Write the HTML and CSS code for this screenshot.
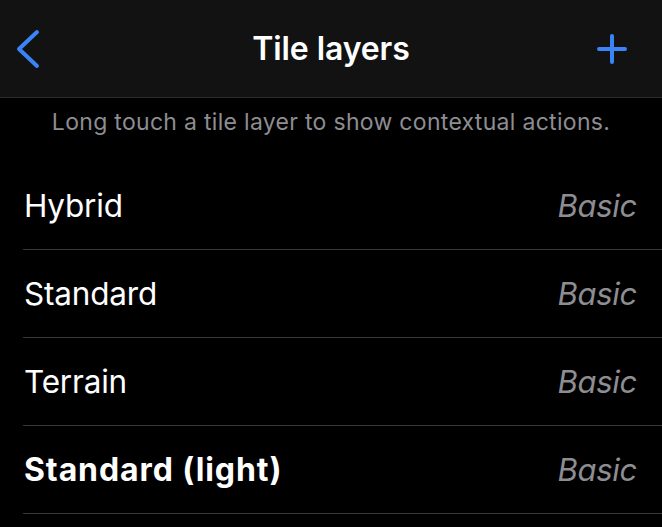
FILE: index.html
```html
<!DOCTYPE html>
<html>
<head>
<meta charset="utf-8">
<link rel="stylesheet" href="styles.css">
</head>
<body>
<div class="screen">
  <header class="navbar">
    <div class="nav-left">
      <svg class="back" width="26" height="42" viewBox="0 0 26 42"><path d="M23 4 L5 21 L23 38" fill="none" stroke="#3a84f7" stroke-width="4" stroke-linecap="round" stroke-linejoin="round"/></svg>
    </div>
    <h1 class="title">Tile layers</h1>
    <div class="nav-right">
      <svg class="plus" width="32" height="32" viewBox="0 0 32 32"><path d="M16 3 V29 M3 16 H29" fill="none" stroke="#3a84f7" stroke-width="4" stroke-linecap="round"/></svg>
    </div>
  </header>
  <p class="hint">Long touch a tile layer to show contextual actions.</p>
  <ul class="list">
    <li class="row"><span class="name">Hybrid</span><span class="kind">Basic</span></li>
    <li class="row"><span class="name">Standard</span><span class="kind">Basic</span></li>
    <li class="row"><span class="name">Terrain</span><span class="kind">Basic</span></li>
    <li class="row"><span class="name name-bold">Standard (light)</span><span class="kind">Basic</span></li>
  </ul>
</div>
</body>
</html>
```

FILE: styles.css
```css
html, body {
  margin: 0;
  padding: 0;
  background: #000;
}
body {
  font-family: Inter, "Noto Sans", sans-serif;
  color: #fff;
  width: 662px;
  height: 527px;
  overflow: hidden;
}
.navbar {
  height: 97px;
  background: #121212;
  border-bottom: 1px solid #2c2c2e;
  display: grid;
  grid-template-columns: 1fr auto 1fr;
  align-items: center;
}
.nav-left {
  display: flex;
  padding-left: 14px;
}
.back {
  display: block;
}
.nav-right {
  display: flex;
  justify-content: flex-end;
  padding-right: 34px;
}
.plus {
  display: block;
}
.title {
  margin: 0;
  font-size: 32px;
  font-weight: 600;
  letter-spacing: -0.1px;
  color: #fff;
}
.hint {
  margin: 0;
  height: 64px;
  box-sizing: border-box;
  padding-top: 10px;
  text-align: center;
  font-size: 23px;
  color: #8d8d92;
  letter-spacing: 0.3px;
}
.list {
  list-style: none;
  margin: 0 0 0 23px;
  padding: 0;
}
.row {
  height: 87px;
  border-bottom: 1px solid #38383a;
  display: flex;
  align-items: center;
  justify-content: space-between;
  padding: 0 25px 0 1px;
}
.name {
  font-size: 31.5px;
  letter-spacing: -0.2px;
  color: #fff;
}
.name-bold {
  font-weight: 700;
  font-size: 32px;
  letter-spacing: 0.9px;
}
.kind {
  font-size: 31px;
  font-style: italic;
  color: #8d8d92;
  letter-spacing: -0.3px;
}
```
